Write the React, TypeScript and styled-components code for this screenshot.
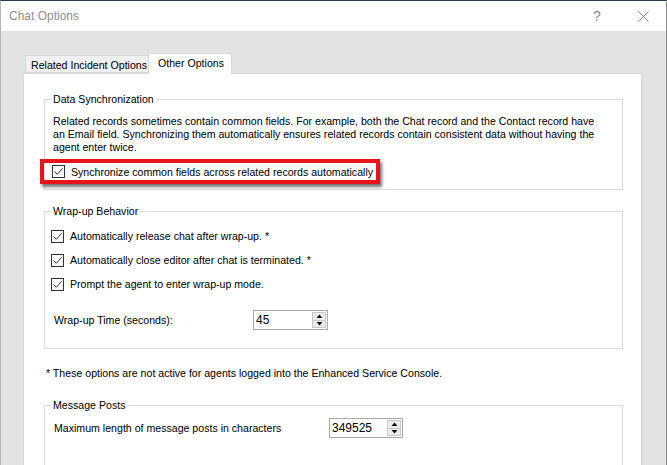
import React from 'react'
import styled, { createGlobalStyle } from 'styled-components'

const GlobalStyle = createGlobalStyle`
    html, body {
        margin: 0;
        padding: 0;
        background: #e3e3e3;
    }
    body {
        font-family: "Liberation Sans", Arial, sans-serif;
        font-size: 10.6px;
        color: #000;
    }
`

const Window = styled.div`
    width: 667px;
    height: 465px;
    box-sizing: border-box;
    display: flex;
    flex-direction: column;
    background: #e3e3e3;
    border-top: 1px solid #2e3d4d;
    border-left: 1px solid #b8b8b8;
    border-right: 1px solid #8c8c8c;
    overflow: hidden;
`

const TitleBar = styled.div`
    height: 30px;
    flex-shrink: 0;
    display: flex;
    align-items: center;
    background: #fff;
    padding-left: 8px;
`

const Title = styled.div`
    flex: 1;
    font-family: "Liberation Sans", Arial, sans-serif;
    font-size: 12px;
    color: #8f8f8f;
`

const CaptionButton = styled.div`
    width: 46px;
    height: 30px;
    display: flex;
    align-items: center;
    justify-content: center;
    color: #8a8a8a;
    font-size: 14px;
`

const Body = styled.div`
    flex: 1;
    display: flex;
    flex-direction: column;
    padding: 22px 23px 0 22px;
    min-height: 0;
`

const TabStrip = styled.div`
    display: flex;
    align-items: flex-end;
    height: 20px;
    position: relative;
    z-index: 1;
`

const Tab = styled.div<{ $active?: boolean }>`
    box-sizing: border-box;
    display: flex;
    align-items: center;
    border: 1px solid #d9d9d9;
    background: ${p => (p.$active ? '#fff' : '#f0f0f0')};
    height: ${p => (p.$active ? '21px' : '18px')};
    margin-bottom: ${p => (p.$active ? '-1px' : '0')};
    margin-left: ${p => (p.$active ? '-2px' : '2px')};
    padding: ${p => (p.$active ? '0 7px 3px 9px' : '1px 2px 0 5px')};
    border-bottom: ${p => (p.$active ? 'none' : '1px solid #d9d9d9')};
    white-space: nowrap;
`

const Panel = styled.div`
    flex: 1;
    background: #fff;
    border: 1px solid #d9d9d9;
    border-right: 2px solid #d9d9d9;
    border-bottom: none;
    padding: 0 18px 0 20px;
    display: flex;
    flex-direction: column;
`

const Group = styled.fieldset<{ $top: number }>`
    margin: ${p => p.$top}px 0 0 0;
    border: 1px solid #dcdcdc;
    padding: 0 8px 0 8px;
    min-width: 0;
`

const Legend = styled.legend`
    margin-left: -2px;
    padding: 0 2px;
    line-height: 13px;
`

const Para = styled.div`
    line-height: 13px;
    padding-top: 9px;
    white-space: nowrap;
`

const Highlight = styled.div`
    margin: 5px 0 5px -13px;
    width: 340px;
    box-sizing: border-box;
    border: 4px solid #e8141b;
    box-shadow: 2px 3px 3px rgba(0, 0, 0, 0.55);
    padding: 0 0 0 8px;
    height: 25px;
    display: flex;
    align-items: center;
`

const CheckRow = styled.label<{ $inset?: number }>`
    display: flex;
    align-items: center;
    gap: 6px;
    height: 24px;
    white-space: nowrap;
    margin-left: ${p => p.$inset ?? 0}px;
`

const Box = styled.span`
    width: 13px;
    height: 13px;
    box-sizing: border-box;
    border: 1px solid #333;
    background: #fff;
    display: flex;
    align-items: center;
    justify-content: center;
    flex-shrink: 0;
`

const CheckList = styled.div`
    padding-top: 6px;
`

const FieldRow = styled.div<{ $labelWidth: number; $top: number; $bottom: number }>`
    display: grid;
    grid-template-columns: ${p => p.$labelWidth}px auto;
    align-items: center;
    margin: ${p => p.$top}px 0 ${p => p.$bottom}px 1px;
`

const Spin = styled.div<{ $width: number }>`
    width: ${p => p.$width}px;
    height: 20px;
    box-sizing: border-box;
    border: 1px solid #ababab;
    display: flex;
    align-items: center;
    justify-content: space-between;
    padding: 0 1px 0 2px;
    font-size: 12px;
`

const SpinButtons = styled.div`
    width: 14px;
    height: 16px;
    display: flex;
    flex-direction: column;
`

const SpinHalf = styled.div`
    flex: 1;
    background: #ececec;
    border: 1px solid #c8c8c8;
    display: flex;
    align-items: center;
    justify-content: center;
    & + & {
        border-top: none;
    }
`

const Footnote = styled.div`
    line-height: 13px;
    margin: 18px 0 0 2px;
`

const Check = () => (
    <Box>
        <svg width="11" height="11" viewBox="0 0 11 11">
            <path d="M1.5 5.5 L4.3 8.3 L9.5 2.5" fill="none" stroke="#333" strokeWidth="1" />
        </svg>
    </Box>
)

const Arrow = ({ up }: { up?: boolean }) => (
    <svg width="7" height="4" viewBox="0 0 7 4">
        <path d={up ? 'M0.5 4 L3.5 0.5 L6.5 4 Z' : 'M0.5 0 L3.5 3.5 L6.5 0 Z'} fill="#111" />
    </svg>
)

const SpinBox = ({ value, width }: { value: string; width: number }) => (
    <Spin $width={width}>
        <span>{value}</span>
        <SpinButtons>
            <SpinHalf><Arrow up /></SpinHalf>
            <SpinHalf><Arrow /></SpinHalf>
        </SpinButtons>
    </Spin>
)

const WRAP_UP_OPTIONS = [
    'Automatically release chat after wrap-up. *',
    'Automatically close editor after chat is terminated. *',
    'Prompt the agent to enter wrap-up mode.',
]

export default function App() {
    return (
        <>
            <GlobalStyle />
            <Window>
                <TitleBar>
                    <Title>Chat Options</Title>
                    <CaptionButton>?</CaptionButton>
                    <CaptionButton>
                        <svg width="11" height="11" viewBox="0 0 11 11">
                            <path d="M0.5 0.5 L10.5 10.5 M10.5 0.5 L0.5 10.5" stroke="#8a8a8a" strokeWidth="1" />
                        </svg>
                    </CaptionButton>
                </TitleBar>
                <Body>
                    <TabStrip>
                        <Tab>Related Incident Options</Tab>
                        <Tab $active>Other Options</Tab>
                    </TabStrip>
                    <Panel>
                        <Group $top={19}>
                            <Legend>Data Synchronization</Legend>
                            <Para>
                                Related records sometimes contain common fields. For example, both the Chat record and the Contact record have
                                <br />
                                an Email field. Synchronizing them automatically ensures related records contain consistent data without having the
                                <br />
                                agent enter twice.
                            </Para>
                            <Highlight>
                                <CheckRow>
                                    <Check />
                                    Synchronize common fields across related records automatically
                                </CheckRow>
                            </Highlight>
                        </Group>
                        <Group $top={15}>
                            <Legend>Wrap-up Behavior</Legend>
                            <CheckList>
                                {WRAP_UP_OPTIONS.map(option => (
                                    <CheckRow key={option} $inset={-2}>
                                        <Check />
                                        {option}
                                    </CheckRow>
                                ))}
                            </CheckList>
                            <FieldRow $labelWidth={199} $top={14} $bottom={18}>
                                <span>Wrap-up Time (seconds):</span>
                                <SpinBox value="45" width={75} />
                            </FieldRow>
                        </Group>
                        <Footnote>* These options are not active for agents logged into the Enhanced Service Console.</Footnote>
                        <Group $top={19}>
                            <Legend>Message Posts</Legend>
                            <FieldRow $labelWidth={275} $top={6} $bottom={40}>
                                <span>Maximum length of message posts in characters</span>
                                <SpinBox value="349525" width={74} />
                            </FieldRow>
                        </Group>
                    </Panel>
                </Body>
            </Window>
        </>
    )
}
